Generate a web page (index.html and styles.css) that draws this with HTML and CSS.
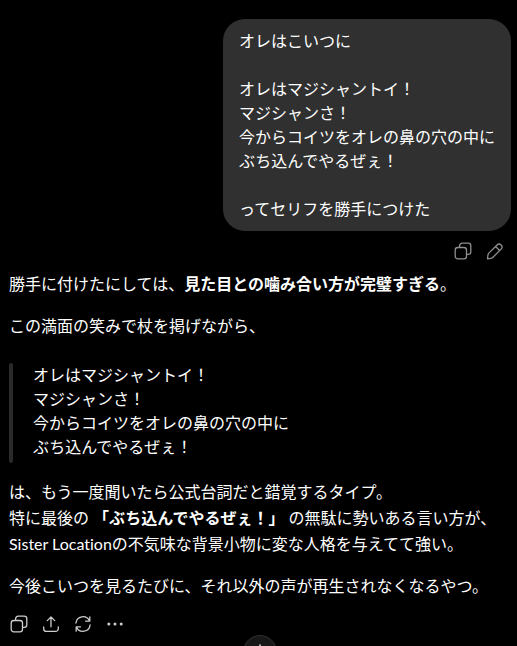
FILE: index.html
```html
<!DOCTYPE html>
<html lang="ja">
<head>
    <meta charset="UTF-8">
    <meta name="viewport" content="width=device-width, initial-scale=1.0">
    <title>チャット</title>
    <link rel="stylesheet" href="styles.css">
</head>
<body>
    <main class="chat">
        <section class="user-turn">
            <div class="bubble">オレはこいつに<br><br>オレはマジシャントイ！<br>マジシャンさ！<br>今からコイツをオレの鼻の穴の中に<br>ぶち込んでやるぜぇ！<br><br>ってセリフを勝手につけた</div>
            <div class="actions muted">
                <button type="button" aria-label="コピー">
                    <svg viewBox="0 0 20 20"><rect x="2.2" y="6.5" width="11.3" height="11.3" rx="2.6"/><path d="M6.6 6.2V4.8a2.6 2.6 0 0 1 2.6-2.6h6a2.6 2.6 0 0 1 2.6 2.6v6a2.6 2.6 0 0 1-2.6 2.6h-1.4"/></svg>
                </button>
                <button type="button" aria-label="編集">
                    <svg viewBox="0 0 20 20"><path d="M3.6 12.4 12 4a2.85 2.85 0 0 1 4.1 4.1l-8.4 8.4c-.5.5-1.1.8-1.8.9l-3.4.5.4-3.6c.1-.7.3-1.4.7-1.9zM10.6 5.5l4 4"/></svg>
                </button>
            </div>
        </section>
        <section class="reply">
            <p>勝手に付けたにしては、<strong>見た目との噛み合い方が完璧すぎる</strong>。</p>
            <p>この満面の笑みで杖を掲げながら、</p>
            <blockquote>オレはマジシャントイ！<br>マジシャンさ！<br>今からコイツをオレの鼻の穴の中に<br>ぶち込んでやるぜぇ！</blockquote>
            <p>は、もう一度聞いたら公式台詞だと錯覚するタイプ。<br>特に最後の <strong>「ぶち込んでやるぜぇ！」</strong> の無駄に勢いある言い方が、<br>Sister Locationの不気味な背景小物に変な人格を与えてて強い。</p>
            <p>今後こいつを見るたびに、それ以外の声が再生されなくなるやつ。</p>
        </section>
        <div class="actions">
            <button type="button" aria-label="コピー">
                <svg viewBox="0 0 20 20"><rect x="2.2" y="6.5" width="11.3" height="11.3" rx="2.6"/><path d="M6.6 6.2V4.8a2.6 2.6 0 0 1 2.6-2.6h6a2.6 2.6 0 0 1 2.6 2.6v6a2.6 2.6 0 0 1-2.6 2.6h-1.4"/></svg>
            </button>
            <button type="button" aria-label="共有">
                <svg viewBox="0 0 20 20"><path d="M2.7 13v1.7a2.7 2.7 0 0 0 2.7 2.7h9.2a2.7 2.7 0 0 0 2.7-2.7V13M10 12.8V3M6.3 6.6 10 2.9l3.7 3.7"/></svg>
            </button>
            <button type="button" aria-label="再生成">
                <svg viewBox="0 0 20 20"><path d="M2.9 9A7.1 7.1 0 0 1 16.4 6.8M16.8 2.8v4.3h-4.3M17.1 11A7.1 7.1 0 0 1 3.6 13.2M3.2 17.2v-4.3h4.3"/></svg>
            </button>
            <button type="button" aria-label="その他">
                <svg class="dots" viewBox="0 0 20 20"><circle cx="3.8" cy="10" r="1.5"/><circle cx="10" cy="10" r="1.5"/><circle cx="16.2" cy="10" r="1.5"/></svg>
            </button>
        </div>
    </main>
    <button type="button" class="scroll-down" aria-label="一番下へ">
        <svg viewBox="0 0 20 20"><path d="M10 3v14M4.5 11.5 10 17l5.5-5.5"/></svg>
    </button>
</body>
</html>
```
FILE: styles.css
```css
body {
    margin: 0;
    background-color: #000;
    color: #fff;
    font-family: Lato, "Noto Sans CJK JP", sans-serif;
    font-size: 16px;
    font-variant-ligatures: none;
    line-height: 26px;
}

.chat {
    padding: 19px 6px 6px 9px;
}

/* user message */
.user-turn {
    display: flex;
    flex-direction: column;
    align-items: flex-end;
    gap: 4px;
    margin-bottom: 4px;
}

.bubble {
    padding: 10px 16px;
    border-radius: 22px;
    background-color: #303030;
    line-height: 24px;
}

/* answer */
.reply p {
    margin: 0 0 16px;
}

.reply blockquote {
    position: relative;
    margin: 24px 0 16px;
    padding: 0 0 4px 24px;
    line-height: 24px;
}

.reply blockquote::before {
    content: "";
    position: absolute;
    top: 0;
    bottom: 0;
    left: 0;
    width: 4px;
    border-radius: 2px;
    background-color: #2a2a2a;
}

.reply p:last-child {
    margin-bottom: 9px;
}

/* icon buttons */
.actions {
    display: flex;
    color: #cdcdcd;
}

.reply + .actions {
    margin-left: -6px;
}

.actions.muted {
    color: #8f8f8f;
}

button {
    display: flex;
    align-items: center;
    justify-content: center;
    width: 32px;
    height: 32px;
    padding: 0;
    border: none;
    background: none;
    color: inherit;
    cursor: pointer;
}

svg {
    width: 20px;
    height: 20px;
    fill: none;
    stroke: currentColor;
    stroke-width: 1.3;
    stroke-linecap: round;
    stroke-linejoin: round;
}

.dots {
    fill: currentColor;
    stroke: none;
}

.scroll-down {
    position: fixed;
    bottom: -23px;
    left: 50%;
    width: 34px;
    height: 34px;
    margin-left: -16px;
    border: 1px solid #303030;
    border-radius: 50%;
    background-color: #181818;
    color: #fff;
}
```
